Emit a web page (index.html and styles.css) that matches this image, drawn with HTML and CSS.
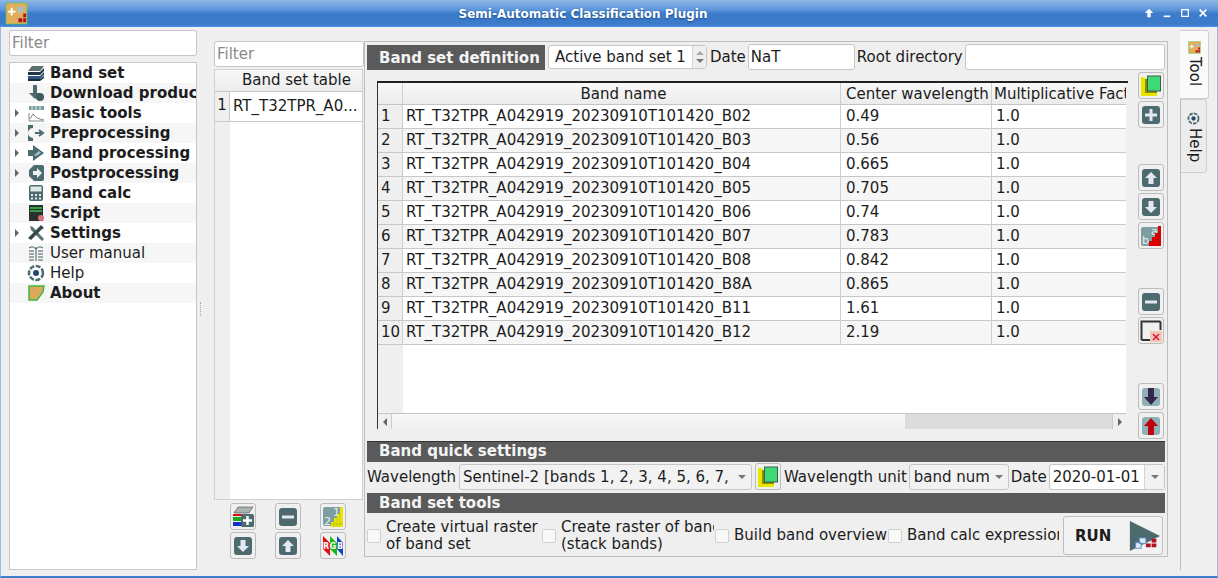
FILE: index.html
```html
<!DOCTYPE html>
<html lang="en">
<head>
  <meta charset="UTF-8">
  <title>Semi-Automatic Classification Plugin</title>
  <link rel="stylesheet" href="styles.css">
</head>
<body>
  <svg class="defs" xmlns="http://www.w3.org/2000/svg">
    <symbol id="i-plugin" viewBox="0 0 24 24">
      <rect x="1" y="1" width="22" height="22" fill="#e0ad5a" stroke="#3fce5a" stroke-dasharray="2 1"/>
      <path d="M3 10h8M7 6v8" stroke="#fff" stroke-width="2"/>
      <path d="M13 5h6v6h-6z" fill="#a8c0c4"/>
      <path d="M14 17h4v4h-4zM19 17h3v4h-3zM19 12h3v4h-3z" fill="#b01020"/>
    </symbol>
    <symbol id="i-layers" viewBox="0 0 18 18">
      <path d="M5 2h12l-4 5H1z" fill="#5b6f73"/>
      <path d="M1 8h12l4-4v3l-4 4H1z" fill="#22364a"/>
      <path d="M1 12h12l4-4v3l-4 4H1z" fill="#2c5480"/>
      <path d="M1 15h12l4-3v2l-4 3H1z" fill="#1d2c3d"/>
    </symbol>
    <symbol id="i-download" viewBox="0 0 18 18">
      <path d="M6 1h4v8h4l-6 6-6-6h4z" fill="#4d6b6e"/>
      <circle cx="13" cy="13" r="4" fill="#3f5a5d"/>
    </symbol>
    <symbol id="i-basic" viewBox="0 0 18 18">
      <path d="M2 2h15v4H2z" fill="#7f9ea2"/>
      <path d="M5 2v4M9 2v4M13 2v4" stroke="#dfe8e8"/>
      <path d="M2 9v8h15M3 15l3-5 4 4 3 1 4 1" fill="none" stroke="#7a8d90"/>
    </symbol>
    <symbol id="i-pre" viewBox="0 0 18 18">
      <path d="M1 1h5v3a5 5 0 0 0 0 10v3H1z" fill="#4d6b6e"/>
      <path d="M8 9h6M12 6l4 3-4 3" fill="none" stroke="#4d6b6e" stroke-width="2"/>
    </symbol>
    <symbol id="i-band" viewBox="0 0 18 18">
      <path d="M1 6h5V1l11 8-11 8v-5H1z" fill="#4d6b6e"/>
      <path d="M7 11l5-4 2 2-5 3z" fill="#9fc0d8"/>
    </symbol>
    <symbol id="i-post" viewBox="0 0 18 18">
      <path d="M7 1h8a2 2 0 0 1 2 2v12a2 2 0 0 1-2 2H7l-5-5V6z" fill="#4d6b6e"/>
      <path d="M6 7h4V4l5 5-5 5v-3H6z" fill="#eef2f2"/>
    </symbol>
    <symbol id="i-calc" viewBox="0 0 18 18">
      <rect x="2" y="1" width="14" height="16" rx="2" fill="#4d6b6e"/>
      <rect x="3.500" y="2.500" width="11" height="5" fill="#dfe8e8"/>
      <path d="M4 10h2v2H4zM8 10h2v2H8zM12 10h2v2h-2zM4 13.500h2v2H4zM8 13.500h2v2H8zM12 13.500h2v2h-2z" fill="#dfe8e8"/>
    </symbol>
    <symbol id="i-script" viewBox="0 0 18 18">
      <rect x="2" y="1" width="14" height="16" fill="#2a3030"/>
      <path d="M3 4h12M3 7h12" stroke="#35c24c" stroke-width="1.500"/>
      <circle cx="14" cy="14" r="3" fill="#d8727a"/>
    </symbol>
    <symbol id="i-settings" viewBox="0 0 18 18">
      <path d="M3 2l3 1 11 12-2 2L4 6z" fill="#5b7477"/>
      <path d="M14 1l3 3-3 2-10 10-3-2L11 4z" fill="#34494c"/>
    </symbol>
    <symbol id="i-manual" viewBox="0 0 18 18">
      <path d="M9 3v14M2 4c3-2 5-1 7 1 2-2 4-3 7-1" fill="none" stroke="#3f5a5d"/>
      <path d="M2 7h5M2 10h5M2 13h5M2 16h5M11 7h5M11 10h5M11 13h5M11 16h5" stroke="#3f5a5d"/>
    </symbol>
    <symbol id="i-help" viewBox="0 0 18 18">
      <circle cx="9" cy="9" r="7" fill="none" stroke="#4d6b6e" stroke-width="2.500" stroke-dasharray="5 1.500"/>
      <circle cx="9" cy="9" r="3" fill="#24476e"/>
    </symbol>
    <symbol id="i-about" viewBox="0 0 18 18">
      <path d="M2 2h15l-1 6-6 8H2z" fill="#dca85a" stroke="#3fb83f" stroke-width="1.500"/>
    </symbol>
    <symbol id="i-setband" viewBox="0 0 22 22">
      <path d="M1 2h4v16h12v3H1z" fill="#e6e600"/>
      <path d="M5 4h12v14H5z" fill="#8c8c00"/>
      <rect x="7.500" y="1" width="13" height="15" fill="#3fd877" stroke="#3a5a50"/>
    </symbol>
    <symbol id="i-plus" viewBox="0 0 22 22">
      <rect x="2" y="2" width="18" height="18" rx="3" fill="#4d6b6e"/>
      <path d="M11 5v12M5 11h12" stroke="#e4e8f4" stroke-width="3"/>
    </symbol>
    <symbol id="i-minus" viewBox="0 0 22 22">
      <rect x="2" y="2" width="18" height="18" rx="3" fill="#4d6b6e"/>
      <path d="M5 11h12" stroke="#e4e8f4" stroke-width="3"/>
    </symbol>
    <symbol id="i-up" viewBox="0 0 22 22">
      <rect x="2" y="2" width="18" height="18" rx="3" fill="#4d6b6e"/>
      <path d="M11 5l6 6h-3.500v6h-5v-6H5z" fill="#e4e8f4"/>
    </symbol>
    <symbol id="i-down" viewBox="0 0 22 22">
      <rect x="2" y="2" width="18" height="18" rx="3" fill="#4d6b6e"/>
      <path d="M11 17l6-6h-3.500V5h-5v6H5z" fill="#e4e8f4"/>
    </symbol>
    <symbol id="i-sort" viewBox="0 0 22 22">
      <rect x="1" y="2" width="19" height="19" rx="2" fill="#7f9ea2"/>
      <text x="11" y="10" class="svg-letter">a</text>
      <text x="2" y="19" class="svg-letter">b</text>
      <path d="M9 21v-5h3v-4h3V8h3V1h3v20z" fill="#d80000"/>
    </symbol>
    <symbol id="i-sortnum" viewBox="0 0 22 22">
      <rect x="1" y="1" width="19" height="19" rx="2" fill="#7f9ea2"/>
      <text x="11" y="10" class="svg-letter">1</text>
      <text x="2" y="19" class="svg-letter">2</text>
      <path d="M9 21v-5h3v-4h3V8h3V1h3v20z" fill="#e6e600"/>
      <path d="M12 16v5M15 12v9M18 8v13M9 18h12" stroke="#b0a800" stroke-width=".5"/>
    </symbol>
    <symbol id="i-clear" viewBox="0 0 22 22">
      <path d="M1.500 20V1.500H20.500" fill="none" stroke="#333" stroke-width="2"/>
      <path d="M1.500 20H11M20.500 1.500V10" fill="none" stroke="#333" stroke-width="2"/>
      <rect x="10" y="11" width="12" height="11" fill="#f0c8b8"/>
      <path d="M13 14l6 6M19 14l-6 6" stroke="#e8103a" stroke-width="1.500"/>
    </symbol>
    <symbol id="i-movedown" viewBox="0 0 22 22">
      <rect x="2" y="2" width="18" height="18" rx="3" fill="#8fb0b4"/>
      <path d="M8 2h6v9h4l-7 8-7-8h4z" fill="#36264e"/>
    </symbol>
    <symbol id="i-moveup" viewBox="0 0 22 22">
      <rect x="2" y="2" width="18" height="18" rx="3" fill="#8fb0b4"/>
      <path d="M8 20h6v-9h4l-7-8-7 8h4z" fill="#c00010"/>
    </symbol>
    <symbol id="i-addset" viewBox="0 0 22 22">
      <path d="M6 1h15l-4 6H2z" fill="#aab4b4" stroke="#333" stroke-width=".5"/>
      <path d="M1 8h10v2H1z" fill="#d81010"/>
      <path d="M1 11h10v4H1z" fill="#18a818"/>
      <path d="M1 16h10v4H1z" fill="#1030c8"/>
      <rect x="9" y="8" width="13" height="13" rx="1.500" fill="#4d6b6e"/>
      <path d="M15.500 10v9M11 14.500h9" stroke="#fff" stroke-width="2.500"/>
    </symbol>
    <symbol id="i-rgb" viewBox="0 0 22 22">
      <path d="M1 1l7 7v13l-7-7z" fill="#e01010"/>
      <path d="M8 1l7 7v13l-7-7z" fill="#18b818"/>
      <path d="M15 1l6 7v13l-6-7z" fill="#1040c8"/>
      <text x="1" y="14" class="svg-rgb">R</text>
      <text x="7.500" y="14" class="svg-rgb">G</text>
      <text x="15" y="14" class="svg-rgb">B</text>
    </symbol>
    <symbol id="i-run" viewBox="0 0 36 36">
      <path d="M2 2l32 16-32 16z" fill="#4d6b6e"/>
      <path d="M12 20h7v6h-7zM8 25h6v6H8z" fill="#dfe8f0" stroke="#5a88c8"/>
      <path d="M19 26h5v4h-5zM25 26h5v4h-5zM25 21h5v4h-5z" fill="#b01020"/>
    </symbol>
  </svg>

  <div class="window">
    <header class="titlebar">
      <svg class="title-icon"><use href="#i-plugin"/></svg>
      <span class="title-text">Semi-Automatic Classification Plugin</span>
      <div class="title-buttons">
        <svg viewBox="0 0 12 12"><path d="M6 1l5 5H8v5H4V6H1z" fill="#fff"/></svg>
        <svg viewBox="0 0 12 12"><path d="M2 9h8v2H2z" fill="#fff"/></svg>
        <svg viewBox="0 0 12 12"><path d="M2 2h8v8H2z" fill="none" stroke="#fff" stroke-width="1.500"/></svg>
        <svg viewBox="0 0 12 12"><path d="M2 2l8 8M10 2l-8 8" stroke="#fff" stroke-width="2"/></svg>
      </div>
    </header>

    <div class="main">
      <aside class="sidebar">
        <input class="field filter-side" placeholder="Filter">
        <ul class="tree">
          <li class="bold"><svg><use href="#i-layers"/></svg>Band set</li>
          <li class="bold"><svg><use href="#i-download"/></svg>Download products</li>
          <li class="bold parent"><svg><use href="#i-basic"/></svg>Basic tools</li>
          <li class="bold parent"><svg><use href="#i-pre"/></svg>Preprocessing</li>
          <li class="bold parent"><svg><use href="#i-band"/></svg>Band processing</li>
          <li class="bold parent"><svg><use href="#i-post"/></svg>Postprocessing</li>
          <li class="bold"><svg><use href="#i-calc"/></svg>Band calc</li>
          <li class="bold"><svg><use href="#i-script"/></svg>Script</li>
          <li class="bold parent"><svg><use href="#i-settings"/></svg>Settings</li>
          <li><svg><use href="#i-manual"/></svg>User manual</li>
          <li><svg><use href="#i-help"/></svg>Help</li>
          <li class="bold"><svg><use href="#i-about"/></svg>About</li>
        </ul>
      </aside>

      <div class="splitter"><span class="handle"></span></div>

      <div class="pane">
        <section class="sets">
          <input class="field filter-sets" placeholder="Filter">
          <div class="sets-table">
            <div class="sets-head">Band set table</div>
            <div class="sets-row"><span class="sets-num">1</span><span class="sets-name">RT_T32TPR_A0...</span></div>
          </div>
          <div class="sets-buttons">
            <button class="btn"><svg><use href="#i-addset"/></svg></button>
            <button class="btn"><svg><use href="#i-minus"/></svg></button>
            <button class="btn"><svg><use href="#i-sortnum"/></svg></button>
            <button class="btn"><svg><use href="#i-down"/></svg></button>
            <button class="btn"><svg><use href="#i-up"/></svg></button>
            <button class="btn"><svg><use href="#i-rgb"/></svg></button>
          </div>
        </section>

        <section class="frame">
          <div class="def-row">
            <div class="bar bar-def">Band set definition</div>
            <div class="spin">
              <span class="spin-value">Active band set 1</span>
              <span class="spin-arrows"><i class="tri-up"></i><i class="tri-down"></i></span>
            </div>
            <label class="lbl">Date</label>
            <input class="field date-nat" value="NaT">
            <label class="lbl">Root directory</label>
            <input class="field root-dir">
          </div>

          <div class="table-row">
            <div class="table-frame">
              <div class="table-view">
                <table class="bands">
                  <colgroup><col class="c-num"><col class="c-name"><col class="c-wave"><col class="c-mult"></colgroup>
                  <thead>
                    <tr><th></th><th class="center">Band name</th><th>Center wavelength</th><th>Multiplicative Factor</th></tr>
                  </thead>
                  <tbody>
                    <tr><th>1</th><td>RT_T32TPR_A042919_20230910T101420_B02</td><td>0.49</td><td>1.0</td></tr>
                    <tr><th>2</th><td>RT_T32TPR_A042919_20230910T101420_B03</td><td>0.56</td><td>1.0</td></tr>
                    <tr><th>3</th><td>RT_T32TPR_A042919_20230910T101420_B04</td><td>0.665</td><td>1.0</td></tr>
                    <tr><th>4</th><td>RT_T32TPR_A042919_20230910T101420_B05</td><td>0.705</td><td>1.0</td></tr>
                    <tr><th>5</th><td>RT_T32TPR_A042919_20230910T101420_B06</td><td>0.74</td><td>1.0</td></tr>
                    <tr><th>6</th><td>RT_T32TPR_A042919_20230910T101420_B07</td><td>0.783</td><td>1.0</td></tr>
                    <tr><th>7</th><td>RT_T32TPR_A042919_20230910T101420_B08</td><td>0.842</td><td>1.0</td></tr>
                    <tr><th>8</th><td>RT_T32TPR_A042919_20230910T101420_B8A</td><td>0.865</td><td>1.0</td></tr>
                    <tr><th>9</th><td>RT_T32TPR_A042919_20230910T101420_B11</td><td>1.61</td><td>1.0</td></tr>
                    <tr><th>10</th><td>RT_T32TPR_A042919_20230910T101420_B12</td><td>2.19</td><td>1.0</td></tr>
                  </tbody>
                </table>
              </div>
              <div class="scrollbar">
                <span class="sb-arrow"><i class="tri-left"></i></span>
                <span class="sb-thumb"></span>
                <span class="sb-track"></span>
                <span class="sb-arrow"><i class="tri-right"></i></span>
              </div>
            </div>
            <div class="side-buttons">
              <button class="btn"><svg><use href="#i-setband"/></svg></button>
              <button class="btn"><svg><use href="#i-plus"/></svg></button>
              <button class="btn group-a"><svg><use href="#i-up"/></svg></button>
              <button class="btn"><svg><use href="#i-down"/></svg></button>
              <button class="btn"><svg><use href="#i-sort"/></svg></button>
              <button class="btn group-b"><svg><use href="#i-minus"/></svg></button>
              <button class="btn"><svg><use href="#i-clear"/></svg></button>
              <button class="btn group-b"><svg><use href="#i-movedown"/></svg></button>
              <button class="btn"><svg><use href="#i-moveup"/></svg></button>
            </div>
          </div>

          <div class="bar bar-quick">Band quick settings</div>
          <div class="quick-row">
            <label class="lbl">Wavelength</label>
            <div class="combo combo-wave"><span class="combo-text">Sentinel-2 [bands 1, 2, 3, 4, 5, 6, 7,</span><i class="tri-down"></i></div>
            <button class="btn btn-wave"><svg><use href="#i-setband"/></svg></button>
            <label class="lbl lbl-unit">Wavelength unit</label>
            <div class="combo combo-unit"><span class="combo-text">band number</span><i class="tri-down"></i></div>
            <label class="lbl">Date</label>
            <div class="date-box"><span class="date-value">2020-01-01</span><span class="date-drop"><i class="tri-down"></i></span></div>
          </div>

          <div class="bar bar-tools">Band set tools</div>
          <div class="tools-row">
            <div class="checks">
              <div class="check"><span class="box"></span><span class="check-text">Create virtual raster<br>of band set</span></div>
              <div class="check"><span class="box"></span><span class="check-text">Create raster of band<br>(stack bands)</span></div>
              <div class="check"><span class="box"></span><span class="check-text">Build band overview</span></div>
              <div class="check"><span class="box"></span><span class="check-text">Band calc expression</span></div>
            </div>
            <button class="run">RUN<svg><use href="#i-run"/></svg></button>
          </div>
        </section>
      </div>

      <nav class="tabs">
        <div class="tab tab-tool"><svg><use href="#i-plugin"/></svg><span>Tool</span></div>
        <div class="tab tab-help"><svg><use href="#i-help"/></svg><span>Help</span></div>
      </nav>
    </div>
  </div>
</body>
</html>
```

FILE: styles.css
```css
* {
  box-sizing: border-box;
}

body {
  margin: 0;
  font-family: 'DejaVu Sans', sans-serif;
  font-size: 15px;
  color: #1c1c1c;
  background: #efefef;
  overflow: hidden;
}

.defs {
  display: none;
}

.svg-letter {
  font-family: 'DejaVu Sans', sans-serif;
  font-size: 11px;
  fill: #e8eeee;
}

.svg-rgb {
  font-family: 'DejaVu Sans', sans-serif;
  font-size: 8px;
  font-weight: bold;
  fill: #fff;
}

.window {
  width: 1218px;
  height: 578px;
  display: flex;
  flex-direction: column;
  border-bottom: 2px solid #3d7fcf;
  border-left: 1px solid #9dbbe0;
  border-right: 1px solid #9dbbe0;
}

/* title bar */

.titlebar {
  height: 27px;
  margin: 0 -1px;
  padding-right: 52px;
  flex: none;
  display: flex;
  align-items: center;
  justify-content: center;
  position: relative;
  background: linear-gradient(#8fb6e6, #5f97dc 35%, #3c7ccb 50%, #3b7bca 90%, #4d91e2);
}

.title-icon {
  position: absolute;
  left: 5px;
  top: 2px;
  width: 23px;
  height: 23px;
}

.title-text {
  color: #fff;
  font-size: 12px;
  font-weight: bold;
  text-shadow: 0 1px 2px #1d4a80;
}

.title-buttons {
  position: absolute;
  right: 10px;
  top: 8px;
  display: flex;
  gap: 8px;
}

.title-buttons svg {
  width: 10px;
  height: 10px;
}

/* layout */

.main {
  flex: 1;
  min-height: 0;
  display: flex;
  padding: 3px 2px 6px 8px;
}

.sidebar {
  width: 188px;
  flex: none;
  display: flex;
  flex-direction: column;
  gap: 6px;
}

.splitter {
  width: 7px;
  flex: none;
  display: flex;
  align-items: center;
  justify-content: center;
}

.handle {
  width: 1px;
  height: 14px;
  margin-top: 18px;
  border-left: 1px dotted #aaa;
}

.pane {
  width: 977px;
  flex: none;
  display: flex;
  padding: 11px 0 0 10px;
  border-right: 1px solid #bdbdbd;
}

/* inputs */

.field {
  height: 26px;
  padding: 0 2px;
  font: inherit;
  color: inherit;
  background: #fff;
  border: 1px solid #c6c6c6;
  border-radius: 3px;
  outline: none;
}

.field::placeholder {
  color: #8a8a8a;
}

.filter-side,
.filter-sets {
  width: 100%;
  flex: none;
}

/* sidebar tree */

.tree {
  flex: 1;
  margin: 0;
  padding: 0;
  list-style: none;
  background: #fff;
  border: 1px solid #c6c6c6;
  overflow: hidden;
}

.tree li {
  height: 20px;
  display: flex;
  align-items: center;
  padding-left: 17px;
  gap: 5px;
  white-space: nowrap;
  position: relative;
}

.tree li:nth-child(even) {
  background: #f6f6f6;
}

.tree svg {
  width: 18px;
  height: 18px;
  flex: none;
}

.bold {
  font-weight: bold;
}

.parent::before {
  content: '';
  position: absolute;
  left: 5px;
  top: 6px;
  border-left: 4px solid #666;
  border-top: 4px solid transparent;
  border-bottom: 4px solid transparent;
}

/* band set table */

.sets {
  width: 150px;
  flex: none;
  display: flex;
  flex-direction: column;
}

.sets-table {
  height: 431px;
  margin-top: 2px;
  margin-right: 1px;
  background: linear-gradient(to right, #efefef 15px, #fff 15px);
  border: 1px solid #d0d0d0;
}

.sets-head {
  height: 22px;
  line-height: 21px;
  padding-left: 27px;
  white-space: nowrap;
  background: linear-gradient(#f8f8f8, #ececec);
  border-bottom: 1px solid #c4c4c4;
}

.sets-row {
  height: 30px;
  display: flex;
  align-items: center;
  background: #fff;
  border-bottom: 1px solid #c8c8c8;
}

.sets-num {
  width: 15px;
  height: 100%;
  line-height: 27px;
  text-align: center;
  flex: none;
  background: #efefef;
  border-right: 1px solid #c8c8c8;
}

.sets-name {
  padding: 0 0 2px 3px;
  white-space: nowrap;
}

.sets-buttons {
  display: grid;
  grid-template-columns: repeat(3, 26px);
  column-gap: 19px;
  row-gap: 2px;
  margin: 3px 0 0 16px;
}

.btn {
  width: 26px;
  height: 27px;
  padding: 0;
  display: flex;
  align-items: center;
  justify-content: center;
  background: #f0f0f0;
  border: 1px solid #bcbcbc;
  border-radius: 3px;
  flex: none;
}

.btn svg {
  width: 22px;
  height: 22px;
}

/* main frame */

.frame {
  width: 804px;
  height: 516px;
  flex: none;
  padding: 2px;
  border: 1px solid #bdbdbd;
  display: flex;
  flex-direction: column;
}

.bar {
  background: #5a5a5a;
  color: #f4f4f4;
  font-weight: bold;
  white-space: nowrap;
}

.def-row {
  height: 26px;
  flex: none;
  display: flex;
  align-items: center;
  gap: 2px;
}

.bar-def {
  width: 178px;
  height: 25px;
  line-height: 26px;
  padding-left: 12px;
  margin-right: 1px;
  flex: none;
}

.lbl {
  white-space: nowrap;
  flex: none;
}

.spin {
  width: 159px;
  height: 24px;
  display: flex;
  flex: none;
  margin-right: 1px;
  background: #fff;
  border: 1px solid #c6c6c6;
  border-radius: 3px;
}

.spin-value {
  flex: 1;
  padding-left: 6px;
  line-height: 23px;
  white-space: nowrap;
}

.spin-arrows {
  width: 14px;
  display: flex;
  flex-direction: column;
  align-items: center;
  justify-content: center;
  gap: 4px;
  background: #efefef;
  border-left: 1px solid #d4d4d4;
}

.tri-up,
.tri-down,
.tri-left,
.tri-right {
  display: block;
  width: 0;
  height: 0;
  flex: none;
}

.tri-up {
  border-left: 4px solid transparent;
  border-right: 4px solid transparent;
  border-bottom: 4px solid #a8a8a8;
}

.tri-down {
  border-left: 4px solid transparent;
  border-right: 4px solid transparent;
  border-top: 4px solid #777;
}

.tri-left {
  border-top: 4px solid transparent;
  border-bottom: 4px solid transparent;
  border-right: 4px solid #666;
}

.tri-right {
  border-top: 4px solid transparent;
  border-bottom: 4px solid transparent;
  border-left: 4px solid #666;
}

.date-nat {
  width: 107px;
  flex: none;
}

.root-dir {
  flex: 1;
  min-width: 0;
}

.table-row {
  height: 371px;
  flex: none;
  display: flex;
  padding: 2px 1px 0 10px;
  gap: 10px;
}

.table-frame {
  width: 751px;
  height: 348px;
  margin-top: 9px;
  flex: none;
  display: flex;
  flex-direction: column;
  border-top: 2px solid #222;
  border-left: 1px solid #333;
  padding-right: 2px;
}

.table-view {
  flex: 1;
  min-height: 0;
  overflow: hidden;
  background: linear-gradient(to right, #efefef 25px, #fff 25px);
  border-bottom: 1px solid #c4c4c4;
}

.bands {
  width: 748px;
  table-layout: fixed;
  border-collapse: separate;
  border-spacing: 0;
  background: #fff;
}

.c-num {
  width: 25px;
}

.c-name {
  width: 438px;
}

.c-wave {
  width: 151px;
}

.c-mult {
  width: 134px;
}

.bands th,
.bands td {
  height: 24px;
  padding: 0 3px 2px;
  font-weight: normal;
  text-align: left;
  white-space: nowrap;
  overflow: hidden;
  border-right: 1px solid #cfcfcf;
  border-bottom: 1px solid #c8c8c8;
}

.bands tr > :nth-child(3) {
  padding-left: 5px;
}

.bands tr > :nth-child(4) {
  padding-left: 4px;
}

.bands tbody tr:nth-child(even) td {
  background: #f6f6f6;
}

.bands tbody th {
  background: #efefef;
}

.bands thead th {
  height: 22px;
  padding-bottom: 0;
  background: linear-gradient(#f8f8f8, #ececec);
  border-bottom-color: #c4c4c4;
}

.bands thead th:last-child {
  padding-left: 2px;
  padding-right: 0;
  border-right: none;
}

.bands thead .center {
  padding-left: 7px;
  text-align: center;
}

.bands td:last-child {
  border-right: none;
}

.scrollbar {
  height: 15px;
  flex: none;
  display: flex;
  background: #f2f2f2;
}

.sb-arrow {
  width: 14px;
  display: flex;
  align-items: center;
  justify-content: center;
  flex: none;
  background: #efefef;
  border-right: 1px solid #ccc;
}

.sb-arrow:last-child {
  border-right: none;
  border-left: 1px solid #ccc;
}

.sb-thumb {
  width: 513px;
  flex: none;
  background: linear-gradient(#f8f8f8, #f0f0f0);
}

.sb-track {
  flex: 1;
  background: #dcdcdc;
}

.side-buttons {
  display: flex;
  flex-direction: column;
  gap: 2px;
}

.group-a {
  margin-top: 34px;
}

.group-b {
  margin-top: 37px;
}

.bar-quick {
  height: 21px;
  line-height: 18px;
  padding-left: 12px;
  flex: none;
  border-top: 1px solid #333;
}

.quick-row {
  height: 31px;
  flex: none;
  display: flex;
  align-items: center;
  gap: 2px;
  padding-bottom: 2px;
}

.combo {
  height: 26px;
  display: flex;
  align-items: center;
  flex: none;
  padding: 0 5px 0 4px;
  gap: 6px;
  background: #f2f2f2;
  border: 1px solid #c6c6c6;
  border-radius: 3px;
}

.combo-text {
  flex: 1;
  min-width: 0;
  overflow: hidden;
  white-space: nowrap;
}

.combo-wave {
  width: 293px;
  margin-left: 1px;
  padding-left: 3px;
}

.combo-unit {
  width: 100px;
}

.btn-wave {
  margin-left: 1px;
}

.lbl-unit {
  margin-left: 1px;
}

.date-box {
  flex: 1;
  height: 26px;
  display: flex;
  min-width: 0;
  background: #fff;
  border: 1px solid #c6c6c6;
  border-radius: 3px;
}

.date-value {
  flex: 1;
  padding-left: 3px;
  line-height: 24px;
}

.date-drop {
  width: 20px;
  display: flex;
  align-items: center;
  justify-content: center;
  background: #f2f2f2;
  border-left: 1px solid #d4d4d4;
}

.bar-tools {
  height: 20px;
  line-height: 20px;
  padding-left: 12px;
  flex: none;
}

.tools-row {
  flex: 1;
  display: flex;
  padding: 3px 2px 0 0;
  gap: 2px;
  min-height: 0;
}

.checks {
  flex: 1;
  display: grid;
  grid-template-columns: 175px 173px 173px 172px;
  height: 39px;
}

.check {
  display: flex;
  align-items: center;
  gap: 5px;
  overflow: hidden;
}

.box {
  width: 14px;
  height: 14px;
  flex: none;
  background: #f8f8f8;
  border: 1px solid #d0d0d0;
  border-radius: 2px;
}

.check-text {
  line-height: 17px;
  white-space: nowrap;
  overflow: hidden;
  flex: 1;
  min-width: 0;
  margin-right: 1px;
}

.run {
  width: 100px;
  height: 39px;
  flex: none;
  display: flex;
  align-items: center;
  padding: 0 0 0 11px;
  gap: 17px;
  font: inherit;
  font-weight: bold;
  color: inherit;
  background: #f2f2f2;
  border: 1px solid #c0c0c0;
  border-radius: 3px;
}

.run svg {
  width: 34px;
  height: 34px;
  flex: none;
}

/* right hand tabs */

.tabs {
  flex: 1;
  display: flex;
  flex-direction: column;
}

.tab {
  display: flex;
  flex-direction: column;
  align-items: center;
  gap: 3px;
  padding-top: 10px;
  border: 1px solid #cfcfcf;
  border-left: none;
  border-radius: 0 3px 3px 0;
}

.tab svg {
  width: 13px;
  height: 13px;
  flex: none;
}

.tab span {
  writing-mode: vertical-rl;
  white-space: nowrap;
  padding-left: 2px;
}

.tab-tool {
  width: 29px;
  height: 69px;
  margin-left: -1px;
  background: #fafafa;
}

.tab-help {
  width: 26px;
  height: 74px;
  padding-top: 12px;
  background: #ececec;
}
```
